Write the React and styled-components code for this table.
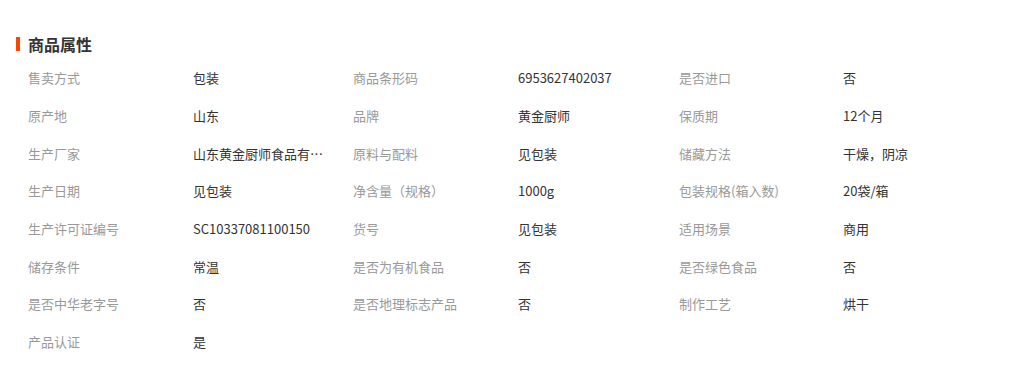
import React from "react";
import styled, { createGlobalStyle } from "styled-components";

const GlobalStyle = createGlobalStyle`
  body {
    margin: 0;
    background: #fff;
    font-family: "Microsoft YaHei", "Noto Sans CJK SC", "Liberation Sans", sans-serif;
  }
`;

const Wrapper = styled.div`
  padding: 30px 0 0 16px;
`;

const Title = styled.div`
  display: flex;
  align-items: center;
  height: 28px;
  font-size: 16px;
  font-weight: bold;
  color: #333;
  margin-bottom: 1px;

  &::before {
    content: "";
    width: 4px;
    height: 14px;
    background: #ff4400;
    margin-right: 8px;
  }
`;

const Grid = styled.div`
  display: grid;
  grid-template-columns: 165px 160px 165px 161px 164px 1fr;
  grid-auto-rows: 37.7px;
  padding-left: 12px;
  font-size: 13px;
`;

const Cell = styled.div`
  display: flex;
  align-items: center;
  min-width: 0;
  color: ${(p) => (p.label ? "#999" : "#333")};
`;

const Text = styled.span`
  max-width: 132px;
  overflow: hidden;
  white-space: nowrap;
  text-overflow: ellipsis;
`;

const attrs = [
  ["售卖方式", "包装"],
  ["商品条形码", "6953627402037"],
  ["是否进口", "否"],
  ["原产地", "山东"],
  ["品牌", "黄金厨师"],
  ["保质期", "12个月"],
  ["生产厂家", "山东黄金厨师食品有限公司"],
  ["原料与配料", "见包装"],
  ["储藏方法", "干燥，阴凉"],
  ["生产日期", "见包装"],
  ["净含量（规格）", "1000g"],
  ["包装规格(箱入数)", "20袋/箱"],
  ["生产许可证编号", "SC10337081100150"],
  ["货号", "见包装"],
  ["适用场景", "商用"],
  ["储存条件", "常温"],
  ["是否为有机食品", "否"],
  ["是否绿色食品", "否"],
  ["是否中华老字号", "否"],
  ["是否地理标志产品", "否"],
  ["制作工艺", "烘干"],
  ["产品认证", "是"],
];

const App = () => {
  return (
    <Wrapper>
      <GlobalStyle />
      <Title>商品属性</Title>
      <Grid>
        {attrs.map(([name, value]) => (
          <React.Fragment key={name}>
            <Cell label>{name}</Cell>
            <Cell>
              <Text title={value}>{value}</Text>
            </Cell>
          </React.Fragment>
        ))}
      </Grid>
    </Wrapper>
  );
};

export default App;
